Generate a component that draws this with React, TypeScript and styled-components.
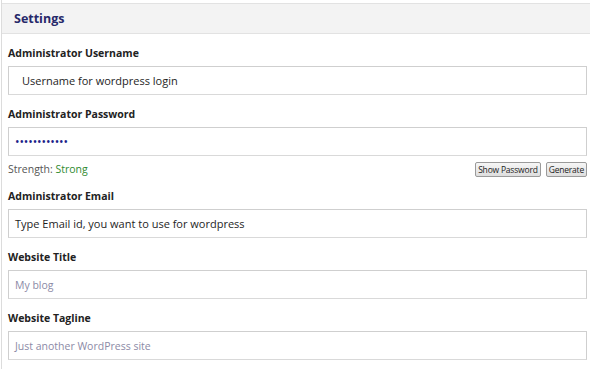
import React from "react";
import styled, { createGlobalStyle } from "styled-components";

const GlobalStyle = createGlobalStyle`
  body {
    margin: 0;
    background: #ffffff;
    font-family: "Open Sans", "Noto Sans", sans-serif;
  }
`;

const Page = styled.div`
  width: 590px;
  height: 369px;
  border-left: 1px solid #dcdcdc;
  margin-left: 1px;
  box-sizing: border-box;
  padding-top: 3px;
  overflow: hidden;
`;

const Header = styled.div`
  height: 29px;
  background: #f3f3f3;
  border-top: 1px solid #e2e2e2;
  border-bottom: 1px solid #e2e2e2;
  display: flex;
  align-items: center;
  padding-left: 12px;
  font-size: 12.5px;
  font-weight: 700;
  color: #27296a;
`;

const Body = styled.div`
  padding: 11px 4px 0 6px;
  display: flex;
  flex-direction: column;
`;

const Field = styled.div<{ $last?: boolean }>`
  display: flex;
  flex-direction: column;
  margin-bottom: ${(p) => (p.$last ? 0 : 11)}px;
`;

const Label = styled.div`
  height: 16px;
  line-height: 16px;
  font-size: 10.5px;
  font-weight: 700;
  color: #222222;
  margin-bottom: 5px;
`;

const Input = styled.div<{ $placeholder?: boolean; $indent?: number; $size?: number }>`
  height: 29px;
  box-sizing: border-box;
  border: 1px solid #cfcfcf;
  border-bottom-color: #d9d9d9;
  display: flex;
  align-items: center;
  padding-left: ${(p) => p.$indent ?? 6}px;
  font-size: ${(p) => p.$size ?? 11}px;
  color: ${(p) => (p.$placeholder ? "#8c8aa6" : "#1e1e1e")};
`;

const Dots = styled.span`
  color: #1d1f8a;
  font-size: 12px;
  letter-spacing: -0.1px;
`;

const StrengthRow = styled.div`
  display: flex;
  align-items: center;
  justify-content: space-between;
  height: 18px;
  margin-top: 4px;
  margin-bottom: 10px;
`;

const Strength = styled.div`
  font-size: 10.5px;
  color: #555555;
`;

const StrengthValue = styled.span`
  color: #2f8a2f;
`;

const Buttons = styled.div`
  display: flex;
  gap: 5px;
`;

const SmallButton = styled.button`
  height: 15px;
  padding: 0 2px;
  border: 1px solid #9a9a9a;
  border-radius: 2px;
  background: linear-gradient(#f6f6f6, #dedede);
  font-family: "Open Sans", "Noto Sans", sans-serif;
  font-size: 8.5px;
  color: #222222;
  line-height: 13px;
  letter-spacing: -0.2px;
`;

export default function App() {
  return (
    <>
      <GlobalStyle />
      <Page>
        <Header>Settings</Header>
        <Body>
          <Field>
            <Label>Administrator Username</Label>
            <Input $indent={13} $size={11}>
              Username for wordpress login
            </Input>
          </Field>
          <Field $last>
            <Label>Administrator Password</Label>
            <Input>
              <Dots>••••••••••••</Dots>
            </Input>
          </Field>
          <StrengthRow>
            <Strength>
              Strength: <StrengthValue>Strong</StrengthValue>
            </Strength>
            <Buttons>
              <SmallButton>Show Password</SmallButton>
              <SmallButton>Generate</SmallButton>
            </Buttons>
          </StrengthRow>
          <Field>
            <Label>Administrator Email</Label>
            <Input>Type Email id, you want to use for wordpress</Input>
          </Field>
          <Field>
            <Label>Website Title</Label>
            <Input $placeholder $size={10.5}>My blog</Input>
          </Field>
          <Field>
            <Label>Website Tagline</Label>
            <Input $placeholder $size={10.5}>Just another WordPress site</Input>
          </Field>
        </Body>
      </Page>
    </>
  );
}
